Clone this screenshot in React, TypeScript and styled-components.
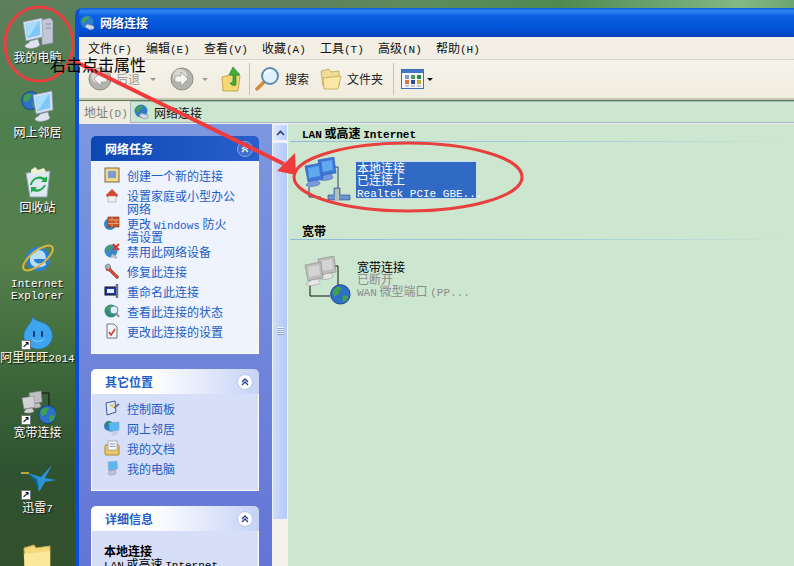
import React from "react";
import styled, { createGlobalStyle } from "styled-components";

const GlobalStyle = createGlobalStyle`
  html, body {
    margin: 0;
    padding: 0;
    overflow: hidden;
    background: #4c7a4c;
  }
  * {
    box-sizing: border-box;
  }
`;

const uiFont = `"Noto Sans CJK SC", "Liberation Sans", sans-serif`;

const Page = styled.div`
  position: relative;
  display: flex;
  width: 794px;
  height: 566px;
  overflow: hidden;
  font-family: ${uiFont};
  font-size: 12px;
  background:
    linear-gradient(90deg, transparent 0, transparent 300px, #5d8c5c 420px, #4f8a50 560px, #82b884 740px, #6da56f 794px) top / 100% 8px no-repeat,
    linear-gradient(180deg, #5e7f5c 0, #4f7f4f 120px, #55804c 260px, #3f6a3c 360px, #2f5230 470px, #33502c 566px);
`;

const Lat = styled.span`
  font-family: "Liberation Mono", monospace;
  font-size: 11px;
  line-height: 0;
`;

/* desktop icons */
const IconColumn = styled.div`
  flex: 0 0 75px;
  display: grid;
  grid-auto-rows: 75px;
  padding-top: 15px;
`;

const DesktopIcon = styled.div`
  display: flex;
  flex-direction: column;
  align-items: center;
`;

const IconSlot = styled.div`
  position: relative;
  width: 36px;
  height: 36px;
`;

const DesktopLabel = styled.div`
  color: #fff;
  font-size: 12px;
  line-height: 12px;
  text-align: center;
  white-space: nowrap;
  text-shadow: 1px 1px 1px #111;
`;

const ShortcutBadge = styled.div`
  position: absolute;
  left: 1px;
  bottom: 1px;
  width: 10px;
  height: 10px;
  background: #fff;
  border: 1px solid #777;
  color: #000;
  font: bold 9px/8px "DejaVu Sans", sans-serif;
  text-align: center;
`;

/* window */
const Window = styled.div`
  flex: 1;
  margin-top: 8px;
  display: flex;
  flex-direction: column;
  min-width: 0;
  border-left: 4px solid #0a4fd8;
  border-radius: 7px 0 0 0;
  overflow: hidden;
`;

const TitleBar = styled.div`
  flex: 0 0 29px;
  display: flex;
  align-items: center;
  gap: 4px;
  padding-left: 1px;
  color: #fff;
  font-weight: 700;
  font-size: 12px;
  text-shadow: 1px 1px 1px #0a2a80;
  background: linear-gradient(180deg, #0a5ad8 0, #2f86f0 3px, #0a5fe0 8px, #0253d8 20px, #0148c4 27px, #0a3fb0 29px);
`;

const MenuBar = styled.div`
  flex: 0 0 23px;
  display: flex;
  align-items: center;
  padding: 0 0 2px 9px;
  background: #f3efe4;
  border-bottom: 1px solid #d8d4c6;
`;

const MenuItem = styled.div`
  flex: 0 0 58px;
  color: #111;
  white-space: nowrap;
`;

const ToolBar = styled.div`
  flex: 0 0 40px;
  display: flex;
  align-items: center;
  padding-left: 9px;
  background: linear-gradient(180deg, #f6f3ea, #efebde);
  border-bottom: 2px solid #c9c6b8;
`;

const ToolLabel = styled.span<{ $muted?: boolean }>`
  color: ${(p) => (p.$muted ? "#9c9c94" : "#222")};
  margin: 0 0 1px 4px;
  white-space: nowrap;
`;

const ToolGap = styled.div<{ $w: number }>`
  flex: 0 0 ${(p) => p.$w}px;
`;

const ToolSep = styled.div`
  width: 1px;
  height: 32px;
  background: #c8c5b6;
`;

const Caret = styled.span<{ $c?: string }>`
  width: 0;
  height: 0;
  border-left: 3px solid transparent;
  border-right: 3px solid transparent;
  border-top: 3px solid ${(p) => p.$c ?? "#999"};
`;

const AddressBar = styled.div`
  flex: 0 0 22px;
  display: flex;
  align-items: center;
  margin-top: 1px;
  background: #efebde;
`;

const AddressLabel = styled.div`
  flex: 0 0 51px;
  padding: 0 0 1px 5px;
  color: #7e7e76;
  white-space: nowrap;
`;

const AddressField = styled.div`
  flex: 1;
  height: 100%;
  display: flex;
  align-items: center;
  gap: 4px;
  padding-left: 3px;
  background: #cde6cf;
  border: 1px solid #a9b8c4;
  border-right: 0;
  color: #111;
`;

const Body = styled.div`
  flex: 1;
  display: flex;
  min-height: 0;
  border-top: 1px solid #e9ecec;
`;

const Sidebar = styled.div`
  flex: 0 0 193px;
  padding: 12px 13px 0 12px;
  display: flex;
  flex-direction: column;
  gap: 15px;
  background: linear-gradient(180deg, #7c97e0, #6375d6);
`;

const Panel = styled.div`
  flex: none;
`;

const PanelHead = styled.div<{ $primary?: boolean }>`
  height: 25px;
  display: flex;
  align-items: center;
  justify-content: space-between;
  padding: 0 6px 0 14px;
  border-radius: 5px 5px 0 0;
  font-weight: 700;
  color: ${(p) => (p.$primary ? "#fff" : "#215dc6")};
  background: ${(p) =>
    p.$primary
      ? "linear-gradient(90deg, #0d47b4, #2a5fcb)"
      : "linear-gradient(90deg, #fff, #fff 35%, #c6d3f7)"};
`;

const Collapse = styled.div<{ $primary?: boolean }>`
  width: 16px;
  height: 16px;
  border-radius: 50%;
  background: ${(p) => (p.$primary ? "#3f6fce" : "#fff")};
  border: 1px solid ${(p) => (p.$primary ? "#8aa6e4" : "#b8c6ea")};
  display: flex;
  align-items: center;
  justify-content: center;
`;

const PanelBody = styled.div<{ $primary?: boolean; $pad: number }>`
  display: flex;
  flex-direction: column;
  padding: ${(p) => p.$pad}px 0 10px 12px;
  background: ${(p) => (p.$primary ? "#eff3fd" : "#d6dff7")};
  border: 1px solid #fff;
  border-top: 0;
`;

const TaskRow = styled.div`
  display: flex;
  min-height: 20px;
  align-items: flex-start;
  gap: 7px;
  padding-top: 2px;
  color: #215dc6;
  line-height: 13px;

  svg {
    margin-top: -2px;
  }
`;

const TaskText = styled.div`
  white-space: nowrap;
`;

const DetailTitle = styled.div`
  padding-top: 13px;
  font-weight: 700;
  color: #000;
  line-height: 13px;
`;

const DetailLine = styled.div`
  color: #000;
  line-height: 13px;
  white-space: nowrap;
`;

const ScrollBar = styled.div`
  flex: 0 0 16px;
  display: flex;
  flex-direction: column;
  gap: 1px;
  background: #f4f2ec;
`;

const ScrollButton = styled.div`
  height: 17px;
  background: linear-gradient(90deg, #dfe8fb, #bccffa);
  border: 1px solid #eef3fd;
  border-radius: 2px;
  display: flex;
  align-items: center;
  justify-content: center;
`;

const ScrollThumb = styled.div`
  height: 378px;
  background: linear-gradient(90deg, #cfdcfb, #b4c8f7);
  border: 1px solid #eef3fd;
  border-radius: 2px;
  display: flex;
  align-items: center;
  justify-content: center;
`;

const Grip = styled.div`
  width: 7px;
  height: 8px;
  background: repeating-linear-gradient(180deg, #eef3fd 0 1px, #8fa8e0 1px 2px);
`;

const Content = styled.div`
  flex: 1;
  min-width: 0;
  padding: 2px 0 0 2px;
  background: #cde6cf;
`;

const GroupHead = styled.div`
  padding-left: 12px;
  height: 16px;
  line-height: 13px;
  font-weight: 700;
  color: #000;
  border-bottom: 1px solid;
  border-image: linear-gradient(90deg, #8fb8dc, #a8d0d8 60%, #cde6cf) 1;
`;

const ConnRow = styled.div<{ $top: number; $bottom: number }>`
  display: flex;
  align-items: flex-start;
  gap: 3px;
  padding: ${(p) => p.$top}px 0 ${(p) => p.$bottom}px 14px;
`;

const ConnText = styled.div<{ $selected?: boolean }>`
  margin-top: 5px;
  padding: 0 0 0 1px;
  line-height: 12px;
  white-space: nowrap;
  width: ${(p) => (p.$selected ? "120px" : "auto")};
  color: ${(p) => (p.$selected ? "#fff" : "#000")};
  background: ${(p) => (p.$selected ? "#316ac5" : "transparent")};
  outline: ${(p) => (p.$selected ? "1px dotted #c8d8f0" : "none")};
`;

const ConnSub = styled.div`
  color: #8c8c8c;
`;

/* annotation on top of the screenshot */
const MarkupLayer = styled.svg`
  position: absolute;
  inset: 0;
  pointer-events: none;
`;

const Note = styled.div`
  position: absolute;
  left: 50px;
  top: 53px;
  font-size: 16px;
  line-height: 22px;
  color: #000;
  white-space: nowrap;
`;

/* drawings */
const Globe = ({ size = 16 }: { size?: number }) => (
  <svg width={size} height={size} viewBox="0 0 16 16">
    <circle cx="8" cy="8" r="7.500" fill="#2f6fc8" />
    <path d="M3 4c2-2 5-2 6-1 0 2-2 2-2 4s-3 1-3 3c-1-1-3-3-1-6zM10 9c2-1 4 0 4 1-1 2-2 4-4 4 0-2-1-3 0-5z" fill="#3fa24a" />
    <circle cx="8" cy="8" r="7.500" fill="none" stroke="#123f88" strokeWidth=".7" />
  </svg>
);

const MonitorShape = ({ x = 0, y = 0 }) => (
  <g transform={`translate(${x} ${y})`}>
    <path d="M0 4l19-4 1 19-17 4z" fill="#d5deef" stroke="#8290b4" strokeWidth=".6" />
    <path d="M2.500 6l14-3 .8 14-13 3z" fill="#7cc8f8" />
    <path d="M3 6l13-3-9 14-3 2z" fill="#a8dcfb" />
    <path d="M7 23l8-2 1 4c2 2 0 4-5 5s-9 0-9-2 4-2 5-5z" fill="#dfe3ee" stroke="#8a90aa" strokeWidth=".5" />
  </g>
);

const MyComputerIcon = () => (
  <svg width="36" height="36" viewBox="0 0 36 36">
    <path d="M21 5l9-2 3 3v22l-11 2z" fill="#c2c7d6" stroke="#7e8498" strokeWidth=".6" />
    <path d="M26 9h5M26 13h5" stroke="#8a90a4" />
    <MonitorShape x={3} y={3} />
  </svg>
);

const NeighborhoodIcon = () => (
  <svg width="36" height="36" viewBox="0 0 36 36">
    <g transform="translate(1 1) scale(1.200)"><Globe size={16} /></g>
    <MonitorShape x={13} y={1} />
  </svg>
);

const RecycleIcon = () => (
  <svg width="36" height="36" viewBox="0 0 36 36">
    <path d="M6 8l24-2-3 26H10z" fill="#dfe8f0" stroke="#8aa0b4" />
    <path d="M11 5l4-3 3 3 6-2 2 4-15 2z" fill="#f2f0d0" />
    <path d="M12 20a7 7 0 0 1 11-5l-2 2h6v-6l-2 2a10 10 0 0 0-15 7zM24 20a7 7 0 0 1-9 4l2-2h-6v6l2-2a10 10 0 0 0 13-6z" fill="#22a84a" />
  </svg>
);

const IEIcon = () => (
  <svg width="36" height="36" viewBox="0 0 36 36">
    <circle cx="18" cy="19" r="12" fill="#2a80d8" />
    <path d="M10 17c1-5 5-7 8-7 5 0 8 3 8 9H14c0 5 7 6 11 2l1 4c-6 4-15 3-16-4z" fill="#b8e0fa" />
    <ellipse cx="18" cy="18" rx="18" ry="7" transform="rotate(-38 18 18)" fill="none" stroke="#d9b440" strokeWidth="2" />
  </svg>
);

const WangIcon = () => (
  <svg width="36" height="36" viewBox="0 0 36 36">
    <path d="M13 2c1 4 8 4 14 8 5 4 6 10 5 14-2 6-7 10-14 10S5 29 4 22c-1-8 7-12 9-20z" fill="#3fa4ef" stroke="#2478c8" strokeWidth=".6" />
    <path d="M14 17v4M22 17v4" stroke="#113a78" strokeWidth="2" strokeLinecap="round" />
    <path d="M12 24c3 3 9 3 12 0" fill="none" stroke="#8fd0fa" />
  </svg>
);

const PcShape = ({ x, y, c1, c2 }: { x: number; y: number; c1: string; c2: string }) => (
  <g transform={`translate(${x} ${y})`}>
    <path d="M0 2l12-2 1 11-11 2z" fill={c1} stroke={c2} strokeWidth=".6" />
    <path d="M4 13l6-1 2 3c0 2-9 3-10 1z" fill={c1} stroke={c2} strokeWidth=".5" />
  </g>
);

const BroadbandDesktopIcon = () => (
  <svg width="36" height="36" viewBox="0 0 36 36">
    <PcShape x={9} y={1} c1="#bfbfc4" c2="#8a8a90" />
    <PcShape x={2} y={6} c1="#d2d2d6" c2="#8a8a90" />
    <path d="M22 3h7v14" fill="none" stroke="#111" />
    <g transform="translate(18 15) scale(1.200)"><Globe size={16} /></g>
  </svg>
);

const XunleiIcon = () => (
  <svg width="36" height="36" viewBox="0 0 36 36">
    <path d="M32 0L21 12 7 8l9 7 3 12 6-10 11-2-11-2z" fill="#2a94d6" />
    <path d="M1 8h8" stroke="#e8c14a" strokeWidth="1.500" />
    <path d="M9 9l8 5 2 10z" fill="#14608c" />
  </svg>
);

const FolderIcon = ({ size = 36 }: { size?: number }) => (
  <svg width={size} height={size} viewBox="0 0 36 36">
    <path d="M4 8l10-3 2 3 14-2v26H5z" fill="#f3d97c" stroke="#c9a84a" />
    <path d="M4 14l26-3v21H5z" fill="#fbe89a" />
  </svg>
);

const NavCircle = ({ dir }: { dir: "left" | "right" }) => (
  <svg width="24" height="24" viewBox="0 0 24 24">
    <circle cx="12" cy="12" r="11" fill="#b4b4ac" stroke="#8e8e88" />
    <circle cx="10" cy="9" r="7" fill="#d8d8d2" />
    <path
      d={dir === "left" ? "M13 5l-7 7 7 7v-4h6V9h-6z" : "M11 5l7 7-7 7v-4H5V9h6z"}
      fill="#f6f6f2"
      stroke="#8a8a84"
      strokeWidth=".6"
    />
  </svg>
);

const UpFolderIcon = () => (
  <svg width="22" height="26" viewBox="0 0 22 26">
    <path d="M1 11l8-2 10 1-2 15H2z" fill="#f6d873" stroke="#b08c30" strokeWidth=".7" />
    <path d="M12 1l7 8h-4v10c-3 1-5 0-6-2 2 0 3-1 3-3V9H8z" fill="#3fae3a" stroke="#1d7a20" strokeWidth=".6" />
  </svg>
);

const SearchIcon = () => (
  <svg width="26" height="26" viewBox="0 0 26 26">
    <path d="M10 15L2 23" stroke="#d98a3c" strokeWidth="3.500" strokeLinecap="round" />
    <circle cx="15" cy="10" r="8" fill="#dff2fb" stroke="#5f8cb0" strokeWidth="2" />
    <path d="M10 8c1-3 4-4 6-3" fill="none" stroke="#fff" strokeWidth="2" />
  </svg>
);

const FoldersIcon = () => (
  <svg width="23" height="22" viewBox="0 0 23 22">
    <path d="M1 3l8-2 2 3 8-1v15H3z" fill="#f1dc96" stroke="#b89c48" strokeWidth=".7" />
    <path d="M3 10l18-2-3 13H4z" fill="#fbe8a4" stroke="#b89c48" strokeWidth=".7" />
  </svg>
);

const viewCells: [number, number, string][] = [
  [4, 6, "#7f9ccc"], [10, 6, "#4d9a5c"], [16, 6, "#2a8a4a"],
  [4, 11, "#d9763c"], [10, 11, "#2a4e9a"], [16, 11, "#c9a63c"],
];

const ViewsIcon = () => (
  <svg width="23" height="20" viewBox="0 0 23 20">
    <rect x=".5" y=".5" width="22" height="19" fill="#f4f8fe" stroke="#3d6fb4" />
    <rect x="1" y="1" width="21" height="3" fill="#3d78cc" />
    {viewCells.map(([x, y, c], i) => (
      <rect key={i} x={x} y={y} width="4" height="4" fill={c} />
    ))}
    <path d="M4 17h4M10 17h4M16 17h4" stroke="#999" />
  </svg>
);

const NetSmall = () => (
  <svg width="16" height="16" viewBox="0 0 16 16">
    <circle cx="7" cy="7" r="6.500" fill="#2f7fc8" />
    <path d="M2 5c2-3 5-4 7-3-1 3-4 3-4 6-2 0-3-1-3-3z" fill="#45a24c" />
    <path d="M7 9l7 2v3l-4 1-5-3z" fill="#cfd6e2" stroke="#6a7488" strokeWidth=".5" />
  </svg>
);

const TaskIcon = ({ kind }: { kind: string }) => {
  const shapes: Record<string, React.ReactNode> = {
    new: (<><rect x="1" y="1" width="14" height="14" fill="#f0d890" stroke="#7a6a38" /><rect x="4" y="4" width="8" height="7" fill="#7c9cd0" /></>),
    home: (<><path d="M2 8l6-6 6 6-1 2H3z" fill="#d84a30" /><rect x="4" y="9" width="8" height="6" fill="#f2f2ea" stroke="#8a8a8a" strokeWidth=".5" /></>),
    fire: (<><circle cx="6" cy="9" r="6" fill="#3a86c8" /><rect x="4" y="2" width="11" height="10" fill="#c8552c" stroke="#7a2a14" strokeWidth=".6" /><path d="M4 5h11M4 8.500h11M8 2v3M12 5v3.500M8 8.500v3.500" stroke="#f0c090" strokeWidth=".7" /></>),
    off: (<><circle cx="7" cy="8" r="6.500" fill="#3a8ac8" /><path d="M2 6c2-3 4-4 6-4 0 3-3 3-3 6-1 0-2-1-3-2z" fill="#45a24c" /><path d="M9 1l6 6M15 1L9 7" stroke="#d83a20" strokeWidth="2" /><path d="M8 11l6 3-2 2-5-2z" fill="#b8c0d4" /></>),
    fix: (<><path d="M2 2l4 1 1 3 8 8-2 2-8-8-3-1z" fill="#d84a30" stroke="#7a2a14" strokeWidth=".5" /><path d="M1 4l3 3 3-3-2-3c-2 0-4 1-4 3z" fill="#a8b0bc" stroke="#5a606c" strokeWidth=".5" /></>),
    rename: (<><rect x="1" y="4" width="11" height="8" fill="#1d3ea8" stroke="#111" /><rect x="3" y="6" width="7" height="4" fill="#e8f0fc" /><path d="M13 1v14" stroke="#6a7488" strokeWidth="2.500" /></>),
    status: (<><circle cx="7" cy="8" r="6.500" fill="#2f8a7c" /><path d="M2 6c2-3 4-4 6-4 0 3-3 3-3 6-1 0-2-1-3-2z" fill="#45a24c" /><circle cx="10" cy="7" r="4" fill="#dff0fb" stroke="#6a90b4" /><path d="M12 10l3 4" stroke="#8a8a84" strokeWidth="2" /></>),
    settings: (<><path d="M3 1h7l3 3v11H3z" fill="#f6f8fc" stroke="#6a7488" /><path d="M5 9l2 3 4-6" fill="none" stroke="#d83a30" strokeWidth="1.600" /></>),
    panel: (<><path d="M2 3l9-2 1 11-9 3z" fill="#dfe8fa" stroke="#3a5a9a" /><path d="M10 8l5-4" stroke="#6a7488" strokeWidth="2" /><path d="M5 5l4-1v4z" fill="#e8c14a" /></>),
    net: (<><circle cx="5" cy="6" r="5" fill="#2f7fc8" /><path d="M1 5c1-3 3-4 5-4-1 3-2 3-2 5z" fill="#2e8a3c" /><path d="M5 3l10-1v8l-9 2z" fill="#5ab8f0" stroke="#8a9cc0" strokeWidth=".6" /><path d="M8 12l5-1 1 3-6 2z" fill="#c8cedf" /></>),
    docs: (<><rect x="1" y="5" width="14" height="10" rx="1" fill="#edc868" stroke="#a88a38" /><rect x="4" y="1" width="9" height="9" fill="#f6f8fc" stroke="#8a8a8a" strokeWidth=".6" /><path d="M5.500 4h6M5.500 6.500h6" stroke="#8a9ac0" /></>),
    pc: (<><path d="M4 2l9-1 .5 8-9 2z" fill="#5ab8f0" stroke="#a0a8c8" strokeWidth=".7" /><path d="M6 11l5-1 1 3c0 2-7 3-8 1z" fill="#c8c0d8" stroke="#7a7a96" strokeWidth=".4" /></>),
  };
  return <svg width="16" height="16" viewBox="0 0 16 16">{shapes[kind]}</svg>;
};

const Chevrons = ({ color = "#28408c" }: { color?: string }) => (
  <svg width="8" height="8" viewBox="0 0 8 8">
    <path d="M1 4l3-3 3 3M1 7l3-3 3 3" fill="none" stroke={color} strokeWidth="1.300" />
  </svg>
);

const ScrollUp = () => (
  <svg width="9" height="6" viewBox="0 0 9 6">
    <path d="M1 5l3.500-3.500L8 5" fill="none" stroke="#2a3f7a" strokeWidth="1.600" />
  </svg>
);

const PcBlue = ({ x, y }: { x: number; y: number }) => (
  <g transform={`translate(${x} ${y})`}>
    <path d="M0 3l16-3 2 16-15 3z" fill="#3d78d8" stroke="#2a5cb4" strokeWidth=".6" />
    <path d="M3 5l11-2 1 10-11 2z" fill="#62a8ec" />
    <path d="M6 18l7-1 2 3c1 3-13 5-14 2 0-2 5-2 5-4z" fill="#7a9ade" stroke="#3d62ac" strokeWidth=".5" />
  </g>
);

const LanIcon = () => (
  <svg width="49" height="49" viewBox="0 0 49 49">
    <path d="M27 10h7v26" fill="none" stroke="#25406e" />
    <path d="M5 30v10h12" fill="none" stroke="#25406e" />
    <PcBlue x={14} y={0} />
    <PcBlue x={1} y={6} />
    <path d="M30 31h6v7h10v5H24v-5h6z" fill="#6d94cc" stroke="#2a4e8c" strokeWidth=".6" />
    <rect x="31" y="32" width="4" height="12" fill="#b7c0b8" />
  </svg>
);

const PcGrey = ({ x, y }: { x: number; y: number }) => (
  <g transform={`translate(${x} ${y})`}>
    <path d="M0 3l16-3 2 16-15 3z" fill="#bcbcbc" stroke="#8a8a8a" strokeWidth=".6" />
    <path d="M3 5l11-2 1 10-11 2z" fill="#d4d4d4" />
    <path d="M6 18l7-1 2 3c1 3-13 5-14 2 0-2 5-2 5-4z" fill="#e6e6e6" stroke="#8a8a8a" strokeWidth=".5" />
  </g>
);

const PppIcon = () => (
  <svg width="49" height="49" viewBox="0 0 49 49">
    <path d="M27 10h7v22" fill="none" stroke="#111" />
    <path d="M6 30v10h20" fill="none" stroke="#111" />
    <PcGrey x={14} y={0} />
    <PcGrey x={1} y={6} />
    <g transform="translate(26 28) scale(1.300)"><Globe size={16} /></g>
  </svg>
);

const desktopItems: { label: React.ReactNode; icon: React.ReactNode; shortcut?: boolean }[] = [
  { label: "我的电脑", icon: <MyComputerIcon /> },
  { label: "网上邻居", icon: <NeighborhoodIcon /> },
  { label: "回收站", icon: <RecycleIcon /> },
  { label: <Lat>Internet<br />Explorer</Lat>, icon: <IEIcon /> },
  { label: <>阿里旺旺<Lat>2014</Lat></>, icon: <WangIcon />, shortcut: true },
  { label: "宽带连接", icon: <BroadbandDesktopIcon />, shortcut: true },
  { label: <>迅雷<Lat>7</Lat></>, icon: <XunleiIcon />, shortcut: true },
  { label: "", icon: <FolderIcon /> },
];

const networkTasks: [string, React.ReactNode][] = [
  ["new", "创建一个新的连接"],
  ["home", <>设置家庭或小型办公<br />网络</>],
  ["fire", <>更改 <Lat>Windows</Lat> 防火<br />墙设置</>],
  ["off", "禁用此网络设备"],
  ["fix", "修复此连接"],
  ["rename", "重命名此连接"],
  ["status", "查看此连接的状态"],
  ["settings", "更改此连接的设置"],
];

const otherPlaces: [string, string][] = [
  ["panel", "控制面板"],
  ["net", "网上邻居"],
  ["docs", "我的文档"],
  ["pc", "我的电脑"],
];

const menus = [
  ["文件", "(F)"], ["编辑", "(E)"], ["查看", "(V)"], ["收藏", "(A)"],
  ["工具", "(T)"], ["高级", "(N)"], ["帮助", "(H)"],
];

export default function App() {
  return (
    <Page>
      <GlobalStyle />
      <IconColumn>
        {desktopItems.map((item, i) => (
          <DesktopIcon key={i}>
            <IconSlot>
              {item.icon}
              {item.shortcut && <ShortcutBadge>↗</ShortcutBadge>}
            </IconSlot>
            <DesktopLabel>{item.label}</DesktopLabel>
          </DesktopIcon>
        ))}
      </IconColumn>

      <Window>
        <TitleBar>
          <NetSmall />
          <span>网络连接</span>
        </TitleBar>
        <MenuBar>
          {menus.map(([name, key]) => (
            <MenuItem key={name}>{name}<Lat>{key}</Lat></MenuItem>
          ))}
        </MenuBar>
        <ToolBar>
          <NavCircle dir="left" />
          <ToolLabel $muted>后退</ToolLabel>
          <ToolGap $w={10} />
          <Caret />
          <ToolGap $w={14} />
          <NavCircle dir="right" />
          <ToolGap $w={8} />
          <Caret />
          <ToolGap $w={13} />
          <UpFolderIcon />
          <ToolGap $w={6} />
          <ToolSep />
          <ToolGap $w={5} />
          <SearchIcon />
          <ToolLabel>搜索</ToolLabel>
          <ToolGap $w={11} />
          <FoldersIcon />
          <ToolLabel>文件夹</ToolLabel>
          <ToolGap $w={10} />
          <ToolSep />
          <ToolGap $w={7} />
          <ViewsIcon />
          <ToolGap $w={3} />
          <Caret $c="#111" />
        </ToolBar>
        <AddressBar>
          <AddressLabel>地址<Lat>(D)</Lat></AddressLabel>
          <AddressField>
            <NetSmall />
            <span>网络连接</span>
          </AddressField>
        </AddressBar>
        <Body>
          <Sidebar>
            <Panel>
              <PanelHead $primary>
                网络任务
                <Collapse $primary><Chevrons color="#fff" /></Collapse>
              </PanelHead>
              <PanelBody $primary $pad={6}>
                {networkTasks.map(([kind, text]) => (
                  <TaskRow key={kind}>
                    <TaskIcon kind={kind} />
                    <TaskText>{text}</TaskText>
                  </TaskRow>
                ))}
              </PanelBody>
            </Panel>
            <Panel>
              <PanelHead>
                其它位置
                <Collapse><Chevrons /></Collapse>
              </PanelHead>
              <PanelBody $pad={6}>
                {otherPlaces.map(([kind, text]) => (
                  <TaskRow key={kind}>
                    <TaskIcon kind={kind} />
                    <TaskText>{text}</TaskText>
                  </TaskRow>
                ))}
              </PanelBody>
            </Panel>
            <Panel>
              <PanelHead>
                详细信息
                <Collapse><Chevrons /></Collapse>
              </PanelHead>
              <PanelBody $pad={0}>
                <DetailTitle>本地连接</DetailTitle>
                <DetailLine><Lat>LAN</Lat> 或高速 <Lat>Internet</Lat></DetailLine>
              </PanelBody>
            </Panel>
          </Sidebar>
          <ScrollBar>
            <ScrollButton><ScrollUp /></ScrollButton>
            <ScrollThumb><Grip /></ScrollThumb>
          </ScrollBar>
          <Content>
            <GroupHead><Lat>LAN</Lat> 或高速 <Lat>Internet</Lat></GroupHead>
            <ConnRow $top={15} $bottom={18}>
              <LanIcon />
              <ConnText $selected>
                本地连接<br />已连接上<br /><Lat>Realtek PCIe GBE...</Lat>
              </ConnText>
            </ConnRow>
            <GroupHead>宽带</GroupHead>
            <ConnRow $top={16} $bottom={0}>
              <PppIcon />
              <ConnText>
                宽带连接
                <ConnSub>已断开<br /><Lat>WAN</Lat> 微型端口 <Lat>(PP...</Lat></ConnSub>
              </ConnText>
            </ConnRow>
          </Content>
        </Body>
      </Window>

      <MarkupLayer width="794" height="566" viewBox="0 0 794 566">
        <ellipse cx="39" cy="44" rx="34" ry="37" fill="none" stroke="#e8403f" strokeWidth="3" />
        <ellipse cx="408" cy="177" rx="114" ry="34" fill="none" stroke="#e8403f" strokeWidth="3" />
        <path d="M72 60L284 164" stroke="#ee3b3b" strokeWidth="4" />
        <path d="M296 175L277 171 295 153z" fill="#ee3b3b" />
      </MarkupLayer>
      <Note>右击点击属性</Note>
    </Page>
  );
}
